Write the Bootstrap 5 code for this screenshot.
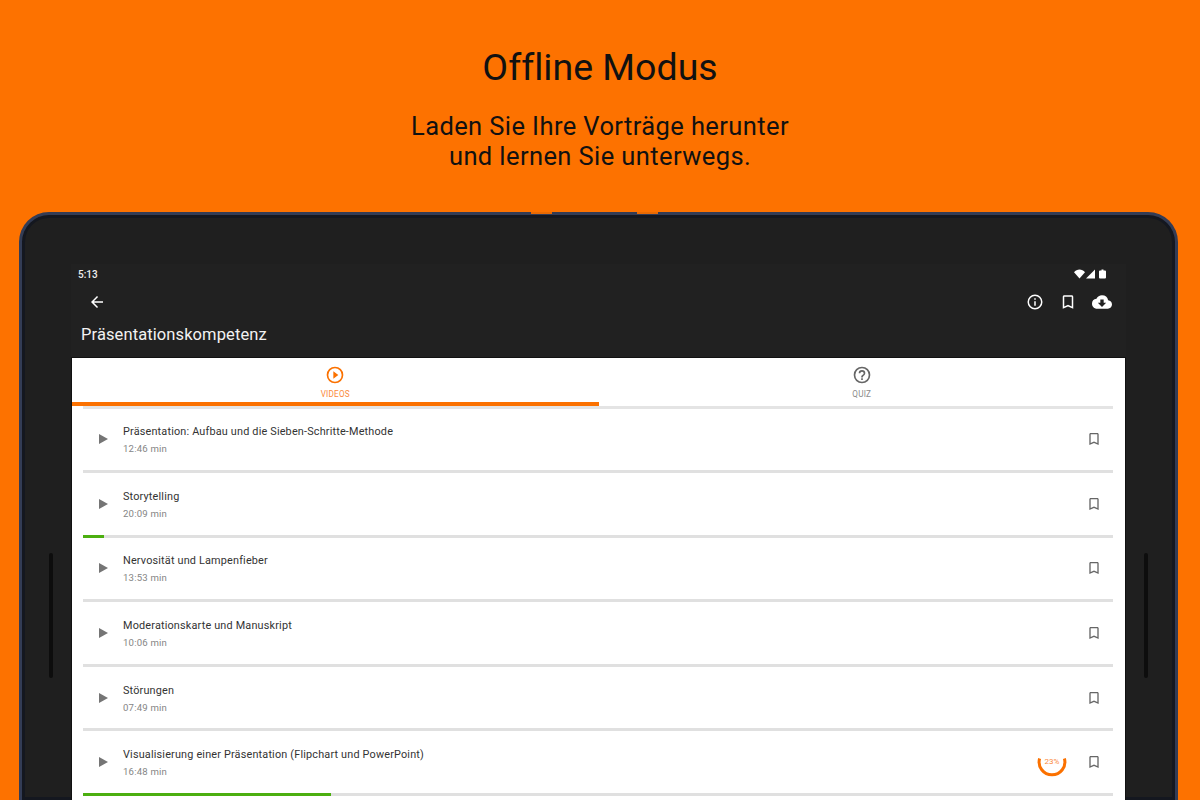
<!DOCTYPE html>
<html lang="de">
<head>
    <meta charset="UTF-8">
    <meta name="viewport" content="width=device-width, initial-scale=1">
    <title>Offline Modus</title>
    <link href="https://cdn.jsdelivr.net/npm/bootstrap@5.3.0/dist/css/bootstrap.min.css" rel="stylesheet">
    <style>
        html, body {
            height: 800px;
            overflow: hidden;
        }
        body {
            background-color: #fd7200;
            font-family: Roboto, "Liberation Sans", sans-serif;
        }
        .promo-head {
            height: 212px;
            padding-top: 42px;
            color: #111;
        }
        .promo-title {
            font-size: 37.5px;
            line-height: 50px;
            font-weight: 400;
            font-variant-ligatures: none;
            margin-bottom: 19px;
        }
        .promo-sub {
            font-size: 25.5px;
            line-height: 30px;
            letter-spacing: 0.4px;
        }
        .tablet-frame {
            position: relative;
            margin: 0 22px 0 19px;
            height: 588px;
            padding: 49px 49px 0 49px;
            background: #1f1f1f;
            border: solid #333c55;
            border-width: 3px 3px 0 3px;
            border-radius: 30px 30px 0 0;
            box-shadow: inset 0 0 0 3px #14171f;
        }
        .side-btn {
            position: absolute;
            top: -3px;
            width: 21px;
            height: 1.5px;
            background: #e86a04;
        }
        .speaker {
            position: absolute;
            top: 338px;
            width: 4px;
            height: 125px;
            background: #0d0d0d;
            border-radius: 2px;
        }
        .screen {
            height: 539px;
            background: #fff;
            overflow: hidden;
        }
        .app-top {
            height: 94px;
            background: #212121;
            color: #fff;
            border-bottom: 1px solid #111;
        }
        .app-body {
            height: 445px;
            border-left: 1px solid #111;
            border-right: 1px solid #111;
        }
        .status-row {
            height: 20px;
            padding: 0 20px 0 7px;
            font-size: 10px;
            font-weight: 500;
            color: #eee;
        }
        .tool-row {
            height: 36px;
            padding-right: 14px;
        }
        .back-btn {
            margin-left: 17px;
        }
        .app-title {
            font-size: 16.5px;
            line-height: 24px;
            padding: 3px 0 0 10px;
            letter-spacing: 0.1px;
            color: #f2f2f2;
        }
        .tab-bar {
            height: 48px;
            position: relative;
        }
        .tab-bar::after {
            content: "";
            position: absolute;
            left: 11px;
            right: 12px;
            bottom: -3px;
            height: 3px;
            background: #e4e4e4;
        }
        .tab-item {
            flex: 1 1 50%;
            height: 48px;
            padding-top: 7px;
            text-align: center;
            font-size: 8.2px;
            line-height: 12px;
            color: #8b8b8b;
            letter-spacing: 0.2px;
            position: relative;
            z-index: 1;
        }
        .tab-item svg {
            display: block;
            margin: 0 auto 3px;
        }
        .tab-on {
            color: #fb8a3c;
            border-bottom: 4px solid #fb7100;
        }
        .lesson-list {
            padding: 2.5px 12px 0 11px;
        }
        .lesson-row {
            height: 64.6px;
            position: relative;
            border-bottom: 3px solid #e0e0e0;
            padding-left: 14px;
            padding-right: 11px;
        }
        .lesson-bar {
            position: absolute;
            left: 0;
            bottom: -3px;
            height: 3px;
            background: #4caf10;
        }
        .lesson-name {
            font-size: 10.85px;
            line-height: 14px;
            color: #333;
            letter-spacing: 0.18px;
        }
        .lesson-time {
            font-size: 9.6px;
            line-height: 14px;
            color: #858585;
            margin-top: 3px;
            letter-spacing: 0.2px;
        }
        .lesson-text {
            margin-left: 14px;
            margin-top: 3px;
        }
        .ring-box {
            position: relative;
            width: 30px;
            height: 30px;
            margin-right: 19px;
        }
        .ring-box span {
            position: absolute;
            inset: 0;
            font-size: 8px;
            line-height: 30px;
            text-align: center;
            color: #fb8a3c;
        }
    </style>
</head>
<body>
    <div class="promo-head text-center">
        <div class="promo-title">Offline Modus</div>
        <div class="promo-sub">Laden Sie Ihre Vorträge herunter<br>und lernen Sie unterwegs.</div>
    </div>

    <div class="tablet-frame">
        <div class="side-btn" style="left: 509px"></div>
        <div class="side-btn" style="left: 615px"></div>
        <div class="speaker" style="left: 27px"></div>
        <div class="speaker" style="right: 27px"></div>

        <div class="screen">
            <div class="app-top">
                <div class="status-row d-flex align-items-center justify-content-between">
                    <span>5:13</span>
                    <svg width="32" height="10" viewBox="0 0 32 10" fill="#fff">
                        <path d="M0 3.2C3-.4 8-.4 11 3.2L5.500 9.500z"/>
                        <path d="M12 9.500 21 .5v9z"/>
                        <path d="M26 1.500h1.500V.5h2v1H31a1 1 0 0 1 1 1v6a1 1 0 0 1-1 1h-5a1 1 0 0 1-1-1v-6a1 1 0 0 1 1-1z"/>
                    </svg>
                </div>
                <div class="tool-row d-flex align-items-center justify-content-between">
                    <svg class="back-btn" width="18" height="18" viewBox="0 0 24 24" fill="#fff">
                        <path d="M20 11H7.830l5.590-5.590L12 4l-8 8 8 8 1.410-1.410L7.830 13H20z"/>
                    </svg>
                    <div class="d-flex align-items-center" style="gap: 15px">
                        <svg width="18" height="18" viewBox="0 0 24 24" fill="#fff">
                            <path d="M11 7h2v2h-2zm0 4h2v6h-2zm1-9a10 10 0 1 0 0 20 10 10 0 0 0 0-20zm0 18a8 8 0 1 1 0-16 8 8 0 0 1 0 16z"/>
                        </svg>
                        <svg width="18" height="18" viewBox="0 0 24 24" fill="#fff">
                            <path d="M17 3H7c-1.100 0-2 .9-2 2v16l7-3 7 3V5c0-1.100-.9-2-2-2zm0 15-5-2.180L7 18V5h10z"/>
                        </svg>
                        <svg width="20" height="20" viewBox="0 0 24 24" fill="#fff">
                            <path d="M19.350 10.040A7.490 7.490 0 0 0 12 4C9.110 4 6.600 5.640 5.350 8.040A5.994 5.994 0 0 0 0 14c0 3.310 2.690 6 6 6h13c2.760 0 5-2.240 5-5 0-2.640-2.050-4.780-4.650-4.960zM17 13l-5 5-5-5h3V9h4v4h3z"/>
                        </svg>
                    </div>
                </div>
                <div class="app-title">Präsentationskompetenz</div>
            </div>

            <div class="app-body">
                <div class="tab-bar d-flex">
                    <div class="tab-item tab-on">
                        <svg width="20" height="20" viewBox="0 0 24 24" fill="#fb7100">
                            <path d="M10 16.500 16 12l-6-4.500zM12 2a10 10 0 1 0 0 20 10 10 0 0 0 0-20zm0 18a8 8 0 1 1 0-16 8 8 0 0 1 0 16z"/>
                        </svg>
                        VIDEOS
                    </div>
                    <div class="tab-item">
                        <svg width="20" height="20" viewBox="0 0 24 24" fill="#666">
                            <path d="M11 18h2v-2h-2zm1-16a10 10 0 1 0 0 20 10 10 0 0 0 0-20zm0 18a8 8 0 1 1 0-16 8 8 0 0 1 0 16zm0-14a4 4 0 0 0-4 4h2c0-1.100.9-2 2-2s2 .9 2 2c0 2-3 1.750-3 5h2c0-2.250 3-2.500 3-5a4 4 0 0 0-4-4z"/>
                        </svg>
                        QUIZ
                    </div>
                </div>

                <div class="lesson-list" id="lessons"></div>
            </div>
        </div>
    </div>

    <script>
        var lessons = [
            { name: "Präsentation: Aufbau und die Sieben-Schritte-Methode", time: "12:46 min", seen: 0 },
            { name: "Storytelling", time: "20:09 min", seen: 21 },
            { name: "Nervosität und Lampenfieber", time: "13:53 min", seen: 0 },
            { name: "Moderationskarte und Manuskript", time: "10:06 min", seen: 0 },
            { name: "Störungen", time: "07:49 min", seen: 0 },
            { name: "Visualisierung einer Präsentation (Flipchart und PowerPoint)", time: "16:48 min", seen: 248, ring: 23 }
        ];

        var playIcon = '<svg width="12" height="12" viewBox="0 0 12 12" fill="#757575"><path d="M2 1l9 5-9 5z"/></svg>';
        var markIcon = '<svg width="16" height="16" viewBox="0 0 24 24" fill="#666"><path d="M17 3H7c-1.100 0-2 .9-2 2v16l7-3 7 3V5c0-1.100-.9-2-2-2zm0 15-5-2.180L7 18V5h10z"/></svg>';

        var html = "";
        lessons.forEach(function (l) {
            var ring = "";
            if (l.ring) {
                ring = '<div class="ring-box"><svg width="30" height="30" viewBox="0 0 30 30" fill="none">' +
                    '<path d="M2.600 11.500A12.880 12.880 0 1 0 27.400 11.500" stroke="#fb7100" stroke-width="3"/></svg>' +
                    '<span>' + l.ring + '%</span></div>';
            }
            var bar = l.seen ? '<div class="lesson-bar" style="width: ' + l.seen + 'px"></div>' : "";
            html += '<div class="lesson-row d-flex align-items-center">' +
                playIcon +
                '<div class="lesson-text flex-grow-1"><div class="lesson-name">' + l.name + '</div>' +
                '<div class="lesson-time">' + l.time + '</div></div>' +
                ring + markIcon + bar + '</div>';
        });
        document.getElementById("lessons").innerHTML = html;
    </script>
    <script src="https://cdn.jsdelivr.net/npm/bootstrap@5.3.0/dist/js/bootstrap.bundle.min.js"></script>
</body>
</html>
